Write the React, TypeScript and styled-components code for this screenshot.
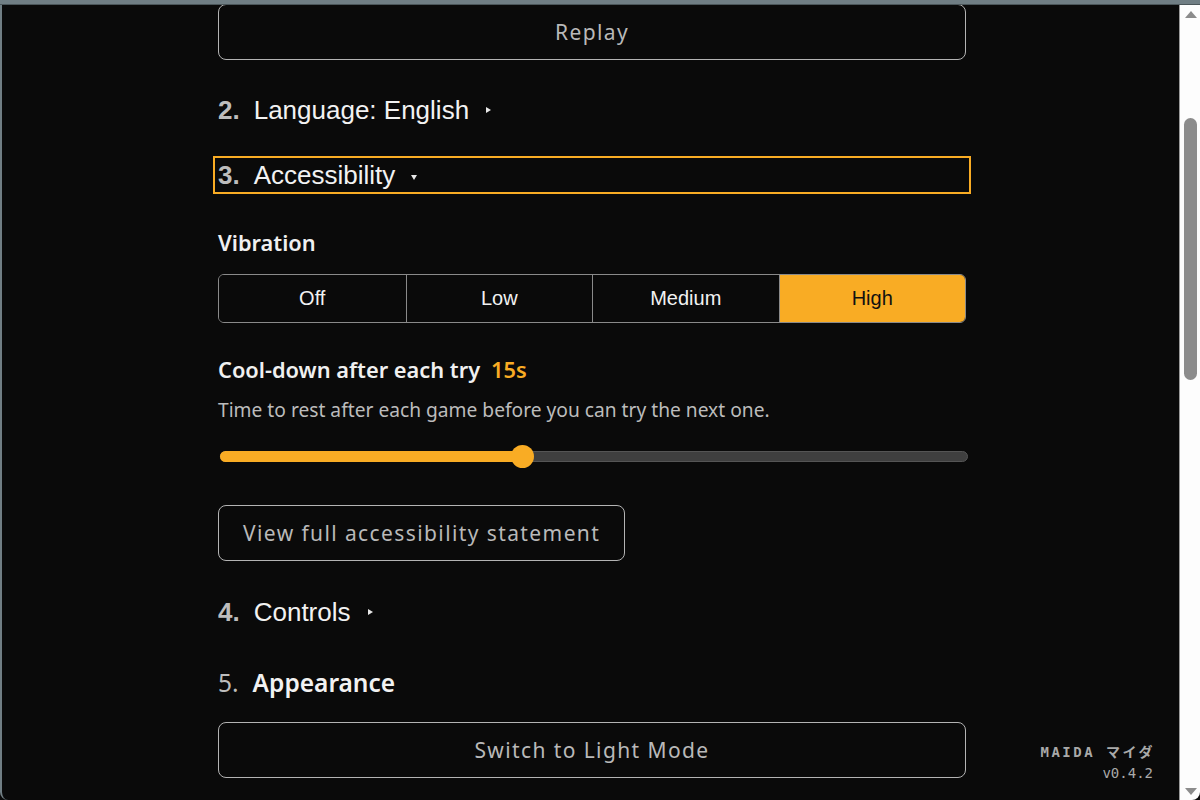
import React from "react";
import styled, { createGlobalStyle } from "styled-components";

const ORANGE = "#f9ac24";

const GlobalStyle = createGlobalStyle`
  html, body { margin: 0; padding: 0; background: #0a0a0a; }
  * { box-sizing: border-box; }
`;

const Frame = styled.div`
  width: 1200px;
  height: 800px;
  display: flex;
  flex-direction: column;
  overflow: hidden;
  background: #0a0a0a;
`;

const TopBand = styled.div`
  flex-shrink: 0;
  height: 5px;
  background: #707e84;
  border-bottom: 1px solid #4b565a;
`;

const Body = styled.div`
  flex: 1;
  min-height: 0;
  display: flex;
  border-left: 2px solid #707e84;
  border-bottom-left-radius: 8px;
  border-bottom-right-radius: 8px;
  overflow: hidden;
`;

const Viewport = styled.main`
  flex: 1;
  position: relative;
  overflow: hidden;
`;

const Column = styled.div`
  width: 748px;
  margin: -1px 0 0 216px;
  display: flex;
  flex-direction: column;
`;

const WideButton = styled.button<{ $top?: number; $fit?: boolean }>`
  margin-top: ${(p) => p.$top ?? 0}px;
  align-self: ${(p) => (p.$fit ? "flex-start" : "stretch")};
  height: 56px;
  padding: 0 24px;
  background: #0a0a0a;
  border: 1px solid #b4b4b4;
  border-radius: 8px;
  color: #b9b9b9;
  font-family: "Noto Sans", sans-serif;
  font-size: 21px;
  letter-spacing: 1.4px;
  cursor: pointer;
`;

const SectionHead = styled.div<{ $top: number; $focused?: boolean }>`
  margin: ${(p) => p.$top}px -5px 0 -5px;
  height: 38px;
  padding-left: 3px;
  display: flex;
  align-items: center;
  border: 2px solid ${(p) => (p.$focused ? ORANGE : "transparent")};
  font-family: "Liberation Sans", Arial, sans-serif;
  font-size: 26px;
  color: #f2f2f2;
`;

const Num = styled.span`
  font-weight: 700;
  color: #bdbdbd;
  margin-right: 14px;
`;

const ArrowRight = styled.span`
  margin-left: 17px;
  width: 0;
  height: 0;
  border-top: 3.5px solid transparent;
  border-bottom: 3.5px solid transparent;
  border-left: 5px solid #e8e8e8;
`;

const ArrowDown = styled.span`
  margin-left: 16px;
  margin-top: 4px;
  width: 0;
  height: 0;
  border-left: 3.5px solid transparent;
  border-right: 3.5px solid transparent;
  border-top: 5px solid #e8e8e8;
`;

const PlainHead = styled.div<{ $top: number }>`
  margin-top: ${(p) => p.$top}px;
  height: 38px;
  display: flex;
  align-items: center;
  font-family: "Noto Sans", sans-serif;
  font-size: 24.5px;
  color: #f2f2f2;
`;

const PlainNum = styled.span`
  color: #bdbdbd;
  margin-right: 14px;
`;

const BoldText = styled.span`
  font-weight: 600;
`;

const Label = styled.div<{ $top: number }>`
  margin-top: ${(p) => p.$top}px;
  height: 28px;
  display: flex;
  align-items: center;
  gap: 11px;
  font-family: "Noto Sans", sans-serif;
  font-weight: 600;
  font-size: 21.8px;
  color: #f0f0f0;
`;

const Value = styled.span`
  color: ${ORANGE};
`;

const Segmented = styled.div`
  margin-top: 18px;
  height: 49px;
  display: grid;
  grid-template-columns: repeat(4, 1fr);
  border: 1px solid #8a8a8a;
  border-radius: 6px;
  overflow: hidden;
`;

const Segment = styled.button<{ $active?: boolean }>`
  border: none;
  border-left: 1px solid #8a8a8a;
  &:first-child { border-left: none; }
  background: ${(p) => (p.$active ? ORANGE : "#0a0a0a")};
  color: ${(p) => (p.$active ? "#111" : "#f2f2f2")};
  font-family: "Liberation Sans", Arial, sans-serif;
  font-size: 20px;
  cursor: pointer;
`;

const Description = styled.div`
  margin-top: 14px;
  height: 24px;
  display: flex;
  align-items: center;
  font-family: "Noto Sans", sans-serif;
  font-size: 19.2px;
  color: #bcbcbc;
`;

const SliderBox = styled.div`
  margin: 23px 0 0 2px;
  width: 748px;
  height: 24px;
  display: flex;
  align-items: center;
  position: relative;
`;

const Track = styled.div`
  flex: 1;
  height: 11px;
  border-radius: 6px;
  background: #3f3f3f;
  border: 1px solid #555;
  position: relative;
`;

const Fill = styled.div`
  position: absolute;
  left: -1px;
  top: -1px;
  bottom: -1px;
  border-radius: 6px;
  background: ${ORANGE};
`;

const Thumb = styled.div`
  position: absolute;
  top: 50%;
  width: 23px;
  height: 23px;
  margin: -11.5px 0 0 -11.5px;
  border-radius: 50%;
  background: ${ORANGE};
`;

const Footer = styled.div`
  position: absolute;
  right: 26px;
  bottom: 17px;
  display: flex;
  flex-direction: column;
  align-items: flex-end;
  font-family: "DejaVu Sans Mono", "Noto Sans CJK JP", monospace;
  color: #a9a9a9;
`;

const Brand = styled.div`
  font-size: 14px;
  font-weight: 700;
  letter-spacing: 2.5px;
  margin-right: -2px;
  line-height: 22px;
`;

const Version = styled.div`
  font-size: 14px;
  line-height: 20px;
`;

const ScrollBar = styled.div`
  flex-shrink: 0;
  width: 21px;
  background: #fdfdfd;
  border-left: 1px solid #9a9a9a;
  display: flex;
  flex-direction: column;
  align-items: center;
  padding: 6px 0 5px 1px;
`;

const UpArrow = styled.div`
  width: 0;
  height: 0;
  border-left: 6px solid transparent;
  border-right: 6px solid transparent;
  border-bottom: 7px solid #8c8c8c;
`;

const DownArrow = styled.div`
  margin-top: auto;
  width: 0;
  height: 0;
  border-left: 6px solid transparent;
  border-right: 6px solid transparent;
  border-top: 7px solid #8c8c8c;
`;

const ScrollThumb = styled.div`
  margin-top: 100px;
  width: 13px;
  height: 262px;
  border-radius: 7px;
  background: #8c8c8c;
`;

export default function App() {
  const pct = 40.4;
  return (
    <>
      <GlobalStyle />
      <Frame>
        <TopBand />
        <Body>
          <Viewport>
            <Column>
              <WideButton>Replay</WideButton>
              <SectionHead $top={31}>
                <Num>2.</Num>
                Language: English
                <ArrowRight />
              </SectionHead>
              <SectionHead $top={27} $focused>
                <Num>3.</Num>
                Accessibility
                <ArrowDown />
              </SectionHead>
              <Label $top={34}>Vibration</Label>
              <Segmented>
                <Segment>Off</Segment>
                <Segment>Low</Segment>
                <Segment>Medium</Segment>
                <Segment $active>High</Segment>
              </Segmented>
              <Label $top={32}>
                Cool-down after each try <Value>15s</Value>
              </Label>
              <Description>
                Time to rest after each game before you can try the next one.
              </Description>
              <SliderBox>
                <Track>
                  <Fill style={{ width: `${pct}%` }} />
                  <Thumb style={{ left: `${pct}%` }} />
                </Track>
              </SliderBox>
              <WideButton $top={37} $fit>
                View full accessibility statement
              </WideButton>
              <SectionHead $top={32}>
                <Num>4.</Num>
                Controls
                <ArrowRight />
              </SectionHead>
              <PlainHead $top={32}>
                <PlainNum>5.</PlainNum>
                <BoldText>Appearance</BoldText>
              </PlainHead>
              <WideButton $top={21}>Switch to Light Mode</WideButton>
            </Column>
            <Footer>
              <Brand>MAIDA マイダ</Brand>
              <Version>v0.4.2</Version>
            </Footer>
          </Viewport>
          <ScrollBar>
            <UpArrow />
            <ScrollThumb />
            <DownArrow />
          </ScrollBar>
        </Body>
      </Frame>
    </>
  );
}
